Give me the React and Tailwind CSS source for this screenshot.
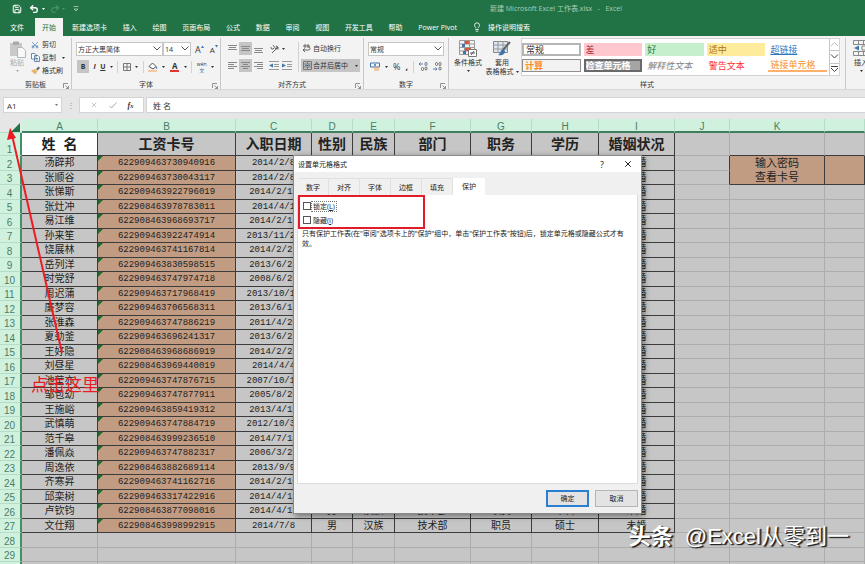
import { Lightbulb, Redo2, Save, Scissors, Undo2, X } from 'lucide-react';

const TABS = ['新建选项卡', '插入', '绘图', '页面布局', '公式', '数据', '审阅', '视图', '开发工具', '帮助', 'Power Pivot'];

const COLUMNS = [
  { letter: 'A', width: 'w-[76px]', title: '姓  名' },
  { letter: 'B', width: 'w-[138px]', title: '工资卡号' },
  { letter: 'C', width: 'w-[76px]', title: '入职日期' },
  { letter: 'D', width: 'w-[41px]', title: '性别' },
  { letter: 'E', width: 'w-[42px]', title: '民族' },
  { letter: 'F', width: 'w-[76px]', title: '部门' },
  { letter: 'G', width: 'w-[61px]', title: '职务' },
  { letter: 'H', width: 'w-[67px]', title: '学历' },
  { letter: 'I', width: 'w-[76px]', title: '婚姻状况' },
  { letter: 'J', width: 'w-[55px]' },
  { letter: 'K', width: 'w-[95px]' },
  { letter: '', width: '' }
];

const PEOPLE = [
  ['汤辟邦', '622909463730940916', '2014/2/8'],
  ['张顺谷', '622909463730043117', '2014/2/8'],
  ['张悌斯', '622909463922796019', '2014/2/12'],
  ['张灶冲', '622908463978783011', '2014/4/1'],
  ['易江维', '622908463968693717', '2014/2/17'],
  ['孙来笙', '622909463922474914', '2013/11/20'],
  ['饶展林', '622909463741167814', '2014/2/21'],
  ['岳列洋', '622909463830598515', '2013/6/23'],
  ['时党舒', '622909463747974718', '2008/6/20'],
  ['周迟蒲', '622909463717968419', '2013/10/10'],
  ['廉梦容', '622909463706568311', '2013/6/13'],
  ['张淮森', '622909463747886219', '2011/4/20'],
  ['夏劲釜', '622909463696241317', '2013/6/23'],
  ['王好隐', '622908463968686919', '2014/2/23'],
  ['刘昼星', '622908463969440019', '2014/4/4'],
  ['池莹亦', '622909463747876715', '2007/10/12'],
  ['邹包幼', '622909463747877911', '2005/8/20'],
  ['王施峪', '622909463859419312', '2013/4/13'],
  ['武慎萌', '622909463747884719', '2012/10/30'],
  ['范千皋', '622908463999236510', '2014/7/14'],
  ['潘佩焱', '622909463747882317', '2006/3/27'],
  ['周逸依', '622908463882689114', '2013/9/9'],
  ['齐寒昇', '622909463741162716', '2014/2/10'],
  ['邱栾树', '622909463317422916', '2014/4/11'],
  ['卢钦钧', '622908463877098016', '2014/4/17', '男', '汉族', '技术部', '职员', '本科'],
  ['文仕翔', '622908463998992915', '2014/7/8', '男', '汉族', '技术部', '职员', '硕士']
];

export default function App() {
  return (
    <div className="flex h-screen flex-col overflow-hidden bg-[#e6e6e6] font-['Open_Sans','Noto_Sans_CJK_SC',sans-serif] text-[7px] leading-[9px] text-[#333]">
      <TitleBar />
      <RibbonTabs />
      <Ribbon />
      <FormulaBar />
      <main className="relative min-h-0 flex-1 overflow-hidden bg-[#c6c6c6]">
        <Sheet />
        <FormatDialog />
        <Annotations />
      </main>
    </div>
  );
}

function TitleBar() {
  return (
    <header className="flex h-[18px] shrink-0 items-center bg-[#217346] text-white">
      <button aria-label="保存" className="ml-3"><Save size={10} strokeWidth={2.4} /></button>
      <button aria-label="撤消" className="ml-[7px] flex items-center gap-[3px]">
        <Undo2 size={10} strokeWidth={3.2} />
        <Caret />
      </button>
      <button aria-label="恢复" className="ml-[5px] flex items-center gap-[2px] text-[#4f9270]">
        <Redo2 size={10} strokeWidth={2.6} />
        <Caret />
      </button>
      <button aria-label="自定义" className="ml-2 text-[#a9cdb7]">
        <svg width="6" height="6" viewBox="0 0 6 6" fill="none" stroke="currentColor"><path d="M0.5 0.5h5M1 3h4L3 5z" strokeWidth=".8" /></svg>
      </button>
      <h1 className="ml-[411px] whitespace-pre pb-[2px] text-[#a9cdb7]">新建 Microsoft Excel 工作表.xlsx   -   Excel</h1>
    </header>
  );
}

function RibbonTabs() {
  return (
    <nav className="flex h-[18px] shrink-0 items-stretch bg-[#217346] text-white">
      <button className="w-[35px] pr-px">文件</button>
      <button className="w-7 bg-[#f3f3f3] text-[#217346]">开始</button>
      <div className="ml-[9px] flex w-[385px] justify-between">
        {TABS.map((tab) => <button key={tab} className="whitespace-nowrap">{tab}</button>)}
      </div>
      <button className="ml-[15px] flex items-center gap-[6px] whitespace-nowrap">
        <Lightbulb size={10} />
        操作说明搜索
      </button>
    </nav>
  );
}

function Caret() {
  return <svg className="shrink-0" width="3" height="2" viewBox="0 0 3 2"><path d="M0 0h3L1.5 2z" fill="currentColor" /></svg>;
}

function Chevron() {
  return (
    <svg className="pointer-events-none absolute right-[2px] top-[4px]" width="8" height="5" viewBox="0 0 8 5" fill="none" stroke="#555">
      <path d="M.5.5 4 4 7.500.5" />
    </svg>
  );
}

function Group({ label, width, launcher = true, children }) {
  return (
    <section className={`flex shrink-0 flex-col border-r border-[#c8c8c8] ${width}`}>
      <div className="h-[42px]">{children}</div>
      <div className="relative h-[9px] text-center">
        {label}
        {launcher ? (
          <svg className="absolute bottom-0 right-[2px]" width="6" height="6" viewBox="0 0 6 6" fill="none" stroke="#777" strokeWidth=".8">
            <path d="M.5 5V.5H5M2.500 2.500l3 3M5.500 3v2.500H3" />
          </svg>
        ) : null}
      </div>
    </section>
  );
}

function Combo({ label, value, width }) {
  return (
    <div className={`relative h-[14px] ${width}`}>
      <select aria-label={label} className="h-full w-full appearance-none border border-[#c6c6c6] bg-white pl-px leading-[11px]">
        <option>{value}</option>
      </select>
      <Chevron />
    </div>
  );
}

function Rule() {
  return <span className="h-3 w-px bg-[#d2d2d2]" />;
}

function Lines({ rows, on }) {
  return (
    <span className={`flex h-[13px] w-[13px] items-center justify-center ${on ? 'bg-[#c5c5c5]' : ''}`}>
      <svg width="9" height="9" viewBox="0 0 9 9" stroke="#888">
        {rows.map(([x1, x2, y]) => <path key={y} d={`M${x1} ${y}H${x2}`} />)}
      </svg>
    </span>
  );
}

function Indent({ out }) {
  return (
    <svg width="10" height="9" viewBox="0 0 10 9" fill="none">
      <path d="M0 .5h10M5 3.500h5M5 5.500h5M0 8.500h10" stroke="#999" />
      <path d={out ? 'M4 2.500v4L0 4.500z' : 'M0 2.500v4l4-2z'} fill="#3f75ad" />
    </svg>
  );
}

function Ribbon() {
  return (
    <div className="flex h-[54px] shrink-0 overflow-hidden border-b border-[#d8d8d8] bg-[#f3f3f3] pt-[2px]">
      <Group label="剪贴板" width="w-[72px]">
        <div className="flex pl-2">
          <button className="flex w-[18px] flex-col items-center pt-[2px] text-[#aaa]">
            <PasteIcon />
            粘贴
            <span className="mt-[3px]"><Caret /></span>
          </button>
          <div className="ml-[5px] flex flex-col">
            <button className="flex h-[13px] items-center gap-[3px]"><Scissors size={8} className="-rotate-90 text-[#3f75ad]" />剪切</button>
            <button className="flex h-[13px] items-center gap-[2px]"><CopyIcon />复制<span className="ml-1"><Caret /></span></button>
            <button className="flex h-[13px] items-center gap-[2px]"><BrushIcon />格式刷</button>
          </div>
        </div>
      </Group>

      <Group label="字体" width="w-[149px]">
        <div className="flex items-center pl-1 pt-1">
          <Combo label="字体" value="方正大黑简体" width="w-[87px]" />
          <Combo label="字号" value="14" width="w-7" />
          <button aria-label="增大字号" className="ml-1 flex text-[9px]">
            A
            <svg width="3" height="3" viewBox="0 0 3 3"><path d="M0 3h3L1.500.5z" fill="#3f75ad" /></svg>
          </button>
          <button aria-label="减小字号" className="ml-[6px] flex text-[8px]">
            A
            <svg width="3" height="3" viewBox="0 0 3 3"><path d="M0 0h3L1.500 2.500z" fill="#3f75ad" /></svg>
          </button>
        </div>
        <div className="mt-1 flex h-[13px] items-center justify-between pl-[5px] pr-[6px]">
          <button className="h-[13px] w-3 bg-[#c5c5c5] font-bold">B</button>
          <button className="font-bold italic">I</button>
          <button className="font-bold underline">U</button>
          <Caret />
          <Rule />
          <svg width="8" height="8" viewBox="0 0 8 8" fill="none" stroke="#777"><path d="M.5.5h7v7h-7zM4 0v8M0 4h8" /></svg>
          <Caret />
          <Rule />
          <svg width="10" height="10" viewBox="0 0 10 10" fill="none">
            <path d="M1 4.500 4.500 1 8 4.500 5 7z" stroke="#555" fill="#fff" />
            <path d="M8 4c1 1 1.500 2 1 3-.8.3-1.200-1-1-3z" fill="#3f75ad" />
            <path d="M0 8h9v2H0z" fill="#f5c7a0" />
          </svg>
          <Caret />
          <span className="border-b-2 border-[#e3342f] px-[2px] text-[8px] font-bold leading-[8px]">A</span>
          <Caret />
          <Rule />
          <span className="flex flex-col items-center text-[5px] leading-[6px]">wén<span className="text-[#3f75ad]">文</span></span>
          <Caret />
        </div>
      </Group>

      <Group label="对齐方式" width="w-[143px]">
        <div className="flex pl-[5px] pt-1">
          <div className="flex w-[72px] flex-col gap-1">
            <div className="flex items-center">
              <Lines rows={[[0, 9, 1.5], [1, 8, 3.5], [0, 9, 5.5]]} />
              <Lines on rows={[[0, 9, 2.5], [1, 8, 4.5], [0, 9, 6.5]]} />
              <Lines rows={[[0, 9, 4.5], [1, 8, 6.5], [0, 9, 8.5]]} />
              <svg className="ml-[5px] mr-[3px]" width="9" height="9" viewBox="0 0 9 9" fill="none" stroke="#555">
                <path d="M1 3a1.500 1.500 0 1 0 3 1M3 1l3 4a1.500 1.500 0 1 0 0-3M2 9l6-6M8 5.500V3H6" strokeWidth=".9" />
              </svg>
              <Caret />
            </div>
            <div className="flex items-center">
              <Lines rows={[[0, 9, 1.5], [0, 6, 3.5], [0, 9, 5.5], [0, 6, 7.5]]} />
              <Lines on rows={[[0, 9, 1.5], [2, 7, 3.5], [0, 9, 5.5], [2, 7, 7.5]]} />
              <Lines rows={[[0, 9, 1.5], [3, 9, 3.5], [0, 9, 5.5], [3, 9, 7.5]]} />
              <span className="ml-1 flex gap-[3px]"><Indent out /><Indent /></span>
            </div>
          </div>
          <div className="flex flex-col gap-1 border-l border-[#d2d2d2] pl-[2px]">
            <button className="flex h-[13px] items-center gap-[2px] px-[2px]">
              <svg width="8" height="9" viewBox="0 0 8 9" fill="none" stroke="#555" strokeWidth=".9"><path d="M0 2h7M2 0v4M5 0v4M0 6h5.500a1.500 1.500 0 0 0 0-3M2 4.500 0 6l2 2" /></svg>
              自动换行
            </button>
            <button className="flex h-[13px] w-[59px] items-center gap-px bg-[#c5c5c5] px-[2px]">
              <svg width="9" height="9" viewBox="0 0 9 9" fill="none"><path d="M.5.5h8v8h-8zM0 3h9M0 6h9M4.500 0v3M4.500 6v3" stroke="#777" /><path d="M2 4.500h5" stroke="#3f75ad" /></svg>
              合并后居中
              <span className="ml-auto"><Caret /></span>
            </button>
          </div>
        </div>
      </Group>

      <Group label="数字" width="w-[85px]">
        <div className="px-1 pt-1"><Combo label="数字格式" value="常规" width="w-full" /></div>
        <div className="mt-1 flex h-[13px] items-center justify-between px-[6px]">
          <svg width="10" height="9" viewBox="0 0 10 9" fill="none"><path d="M.5 1h9v4h-9z" stroke="#3f75ad" /><circle cx="5" cy="3" r="1" fill="#3f75ad" /><path d="M4 6h5M4 8h5" stroke="#e8a25c" /></svg>
          <Caret />
          <span className="text-[9px]">%</span>
          <span className="text-[9px] font-bold">,</span>
          <Rule />
          <DecimalIcon arrow="M4 2H0M1.500.5 0 2l1.500 1.500" top={6} />
          <DecimalIcon arrow="M0 7h4M2.500 5.500 4 7 2.500 8.500" top={1} />
        </div>
      </Group>

      <Group label="样式" width="w-[397px]" launcher={false}>
        <div className="flex pl-1">
          <button className="flex w-[30px] flex-col items-center pt-[2px]">
            <svg width="18" height="17" viewBox="0 0 18 17" fill="none">
              <path d="M.5.500h15v14H.5zM0 4h16M0 7.500h16M0 11h16M5.500 0v15M10.500 0v15" stroke="#999" />
              <path d="M6 1h4v3H6zM6 8h6v3H6z" fill="#d9553b" />
              <path d="M3 4h3v3H3zM4 11h3v3H4z" fill="#3f75ad" />
              <path d="M9.500 9.500h8v7h-8z" fill="#fff" stroke="#777" /><path d="M11 13h5M15 11l-3 4" stroke="#555" />
            </svg>
            <span className="mt-px whitespace-nowrap">条件格式</span>
            <span className="mt-[3px]"><Caret /></span>
          </button>
          <button className="ml-[2px] flex w-[34px] flex-col items-center pt-[2px]">
            <svg width="18" height="17" viewBox="0 0 18 17" fill="none">
              <path d="M.5 1.500h14v11H.5z" fill="#dce7f3" stroke="#888" /><path d="M0 5h15M0 9h15M5 1v12M10 1v12" stroke="#999" />
              <path d="m17 2-7 8" stroke="#666" strokeWidth="2" /><path d="M10 9c-3 1-2 4-5 6 3 1 7 0 7-4z" fill="#3f75ad" />
            </svg>
            <span className="mt-px">套用</span>
            <span className="flex items-center gap-[2px] whitespace-nowrap">表格格式<Caret /></span>
          </button>
          <StyleGallery />
        </div>
      </Group>

      <button className="flex w-[30px] shrink-0 flex-col items-center pt-[2px]">
        <svg width="16" height="17" viewBox="0 0 16 17" fill="none">
          <path d="M.5.5h15v4H.5zM.5 11.500h15v4H.5zM5.500 0v4M10.500 0v4M5.500 12v4M10.500 12v4M9 6h7v4H9z" stroke="#888" />
          <path d="M6 5.500v5L1 8z" fill="#3f75ad" />
        </svg>
        <span className="mt-px">插入</span>
        <span className="mt-[3px]"><Caret /></span>
      </button>
    </div>
  );
}

function DecimalIcon({ arrow, top }) {
  return (
    <svg width="9" height="9" viewBox="0 0 9 9" fill="none">
      <path d={arrow} stroke="#3f75ad" strokeWidth=".9" />
      <g stroke="#555" strokeWidth=".8">
        <rect x="6" y=".5" width="2" height="3" rx="1" />
        <rect x="6" y="5" width="2" height="3" rx="1" />
        <rect x="2.500" y={top - 0.5} width="2" height="3" rx="1" />
      </g>
    </svg>
  );
}

function PasteIcon() {
  return (
    <svg width="17" height="18" viewBox="0 0 17 18" fill="none">
      <path d="M1 3h12v13H1z" fill="#c9c9c9" />
      <path d="M4 1.500h6V5H4z" fill="#aaa" />
      <path d="M8.500 7.500h5l3 3v7h-8z" fill="#f8f8f8" stroke="#b5b5b5" />
    </svg>
  );
}

function CopyIcon() {
  return (
    <svg width="9" height="9" viewBox="0 0 9 9" fill="#fff" stroke="#5b7da5" strokeWidth=".9">
      <path d="M.5.5h3.500l1 1v4.500H.5zM3.500 2.500H7l1.500 1.500v4.500h-5zM5 5.500h2M5 7h2" />
    </svg>
  );
}

function BrushIcon() {
  return (
    <svg width="9" height="9" viewBox="0 0 9 9">
      <path d="m5 3 2.500-2.500L9 2 6.500 4.500z" fill="#666" />
      <path d="M0 4.500 4 3l2.500 2.500L4 8.500z" fill="#e9b56b" />
    </svg>
  );
}

function StyleGallery() {
  const cell = 'flex h-[13px] items-center overflow-hidden whitespace-nowrap text-[9px] leading-[9px]';
  return (
    <div className="ml-auto mr-[5px] flex h-[38px] w-[319px] border border-[#d2d2d2] bg-white">
      <div className="grid flex-1 grid-cols-5 content-center gap-[3px] pr-[2px]">
        <button className={`${cell} border-2 border-[#b5b5b5] px-[2px]`}>常规</button>
        <button className={`${cell} bg-[#ffc7ce] px-[2px] text-[#b32b3c]`}>差</button>
        <button className={`${cell} bg-[#c6efce] px-[2px] text-[#2c7a3a]`}>好</button>
        <button className={`${cell} bg-[#ffeb9c] px-[2px] text-[#a87619]`}>适中</button>
        <button className={`${cell} px-[2px] text-[#2f77c2] underline`}>超链接</button>
        <button className={`${cell} border border-[#8f8f8f] bg-[#f2f2f2] px-[2px] font-bold text-[#fa8d2a]`}>计算</button>
        <button className={`${cell} border-2 border-[#6a6a6a] bg-[#a5a5a5] font-bold text-white`}>检查单元格</button>
        <button className={`${cell} px-[2px] italic text-[#7f7f7f]`}>解释性文本</button>
        <button className={`${cell} px-[2px] text-[#ff3030]`}>警告文本</button>
        <button className={`${cell} border-b-2 border-[#ffb06a] px-[2px] text-[#fa8d2a]`}>链接单元格</button>
      </div>
      <div className="flex w-[10px] flex-col border-l border-[#c6c6c6]">
        {['M1 4 4.500.5 8 4', 'M1 .5 4.500 4 8 .5', 'M1 .500h7M1 2l3.500 3.500L8 2'].map((d, i) => (
          <button key={d} aria-label="滚动样式" className="flex flex-1 items-center border-b border-[#c6c6c6] last:border-b-0">
            <svg width="9" height="6" viewBox="0 0 9 6" fill="none" stroke={i ? '#444' : '#bbb'}><path d={d} /></svg>
          </button>
        ))}
      </div>
    </div>
  );
}

function FormulaBar() {
  return (
    <div className="flex h-[29px] shrink-0 items-start pl-[3px] pt-[7px] text-[8px]">
      <div className="relative h-4 w-[59px]">
        <input aria-label="名称框" defaultValue="A1" className="h-full w-full border border-[#d4d4d4] bg-white pl-[3px] outline-none" />
        <span className="absolute right-1 top-[7px] text-[#777]"><Caret /></span>
      </div>
      <span className="w-[17px] text-center leading-4 text-[#999]">⋮</span>
      <div className="flex h-4 w-[65px] items-center justify-around border border-[#d4d4d4] bg-white px-1">
        <X size={8} className="text-[#aaa]" />
        <svg width="8" height="7" viewBox="0 0 8 7" fill="none" stroke="#aaa"><path d="m.5 4 2 2 5-5.500" /></svg>
        <i className="font-['Liberation_Serif',serif] font-bold">f<small>x</small></i>
      </div>
      <input aria-label="编辑栏" defaultValue="姓 名" className="ml-[2px] h-4 min-w-0 flex-1 border border-r-0 border-[#d4d4d4] bg-white pl-[6px] outline-none" />
    </div>
  );
}

function Sheet() {
  const rowHead = 'border-b border-r-2 border-b-[#b5dcc6] border-r-[#3f9068] bg-[#d1f1df] p-0 pr-px align-bottom text-[10px] font-normal leading-[10px] text-[#4b7d65]';
  const grid = 'border-b border-r border-[#adadad] p-0';
  const data = 'overflow-hidden whitespace-nowrap border-b border-r border-[#3c3c3c] p-0 text-center';

  return (
    <table className="w-full table-fixed border-separate border-spacing-0 font-['Liberation_Sans','Noto_Sans_CJK_SC',sans-serif] text-[#222]">
      <colgroup>
        <col className="w-[22px]" />
        {COLUMNS.map((col, i) => <col key={i} className={col.width} />)}
      </colgroup>
      <thead>
        <tr className="h-[14px]">
          <th className="border-b border-[#b5dcc6] bg-[#e6e6e6] p-0 align-bottom">
            <svg className="ml-auto mr-[2px]" width="9" height="9" viewBox="0 0 9 9"><path d="M9 0v9H0z" fill="#217346" /></svg>
          </th>
          {COLUMNS.map((col, i) => (
            <th key={i} className="border-b-2 border-r border-b-[#3f7f60] border-r-[#b5dcc6] bg-[#d1f1df] p-0 pt-[3px] text-[10px] font-normal leading-[9px] text-[#4b7d65]">{col.letter}</th>
          ))}
        </tr>
      </thead>
      <tbody>
        <tr className="h-[23px]">
          <th className={rowHead}>1</th>
          {COLUMNS.map((col, i) => (
            <td
              key={i}
              className={col.title ? `${data} whitespace-pre text-[14px] font-bold leading-[22px] ${i === 0 ? 'bg-white' : ''}` : `${grid} ${i > 9 ? 'border-b-[#3c3c3c]' : ''}`}
            >
              {col.title}
            </td>
          ))}
        </tr>
        {PEOPLE.map((person, r) => (
          <tr key={person[1]} className={r % 2 ? 'h-[14px]' : 'h-[15px]'}>
            <th className={rowHead}>{r + 2}</th>
            <td className={`${data} text-[10px] leading-[12px]`}>{person[0]}</td>
            <td className={`${data} relative bg-[#c29c82] font-['Liberation_Mono',monospace] text-[9px] leading-[12px]`}>
              <svg className="absolute left-0 top-0" width="5" height="5" viewBox="0 0 5 5"><path d="M0 0h5L0 5z" fill="#1d6b2c" /></svg>
              {person[1]}
            </td>
            <td className={`${data} font-['Liberation_Mono',monospace] text-[9px] leading-[12px]`}>{person[2]}</td>
            {[3, 4, 5, 6, 7].map((i) => <td key={i} className={`${data} text-[10px] leading-[12px]`}>{person[i]}</td>)}
            <td className={`${data} text-[10px] leading-[12px]`}>未婚</td>
            <td className={`${grid} ${r < 2 ? 'border-r-[#3c3c3c]' : ''}`} />
            {r === 0 ? (
              <>
                <td rowSpan={2} className={`${data} bg-[#c29c82] text-[11px] leading-[14px]`}>输入密码<br />查看卡号</td>
                <td rowSpan={2} className={`${data} bg-[#c29c82]`} />
              </>
            ) : null}
            {r > 1 ? <><td className={grid} /><td className={grid} /></> : null}
          </tr>
        ))}
        {['28', '29', ''].map((n, r) => (
          <tr key={n} className={r % 2 ? 'h-[14px]' : 'h-[15px]'}>
            <th className={rowHead}>{n}</th>
            {COLUMNS.map((col, i) => <td key={i} className={grid} />)}
          </tr>
        ))}
      </tbody>
    </table>
  );
}

function FormatDialog() {
  return (
    <div role="dialog" aria-label="设置单元格格式" className="absolute left-[293px] top-9 flex h-[359px] w-[349px] flex-col border border-[#8a8a8a] bg-[#f0f0f0] text-[#222] shadow-[2px_2px_6px_rgba(0,0,0,0.45)]">
      <div className="flex h-4 shrink-0 items-center bg-white pl-1">
        <h2>设置单元格格式</h2>
        <button aria-label="帮助" className="ml-auto text-[9px]">?</button>
        <button aria-label="关闭" className="ml-[19px] mr-2"><X size={10} strokeWidth={2.400} /></button>
      </div>
      <div className="mt-[6px] flex h-[17px] shrink-0 pl-1">
        {['数字', '对齐', '字体', '边框', '填充'].map((tab) => (
          <button key={tab} className="w-[31px] border-r border-t border-[#e0e0e0]">{tab}</button>
        ))}
        <button className="w-8 bg-white">保护</button>
      </div>
      <div className="mx-[3px] flex-1 border border-t-0 border-[#dcdcdc] bg-white">
        <div className="w-[127px] border-2 border-[#e01b2a] pl-[3px] pt-[2px]">
          <CheckRow text="锁定" hotkey="L" focused />
          <CheckRow text="隐藏" hotkey="I" />
        </div>
        <p className="px-1 leading-[10px]">
          只有保护工作表(在"审阅"选项卡上的"保护"组中，单击"保护工作表"按钮)后，锁定单元格或隐藏公式才有效。
        </p>
      </div>
      <div className="flex h-[29px] shrink-0 items-center justify-end gap-[6px] pr-[3px]">
        <button className="h-[17px] w-[43px] border-2 border-[#2a7fd0] bg-[#e3e3e3]">确定</button>
        <button className="h-[17px] w-[43px] border border-[#b5b5b5] bg-[#e3e3e3]">取消</button>
      </div>
    </div>
  );
}

function CheckRow({ text, hotkey, focused }) {
  return (
    <label className="flex h-[14px] items-center">
      <input type="checkbox" className="h-2 w-2 appearance-none border border-[#555] bg-white" />
      <span className={`border px-px ${focused ? 'border-dotted border-[#777]' : 'border-transparent'}`}>{text}(<u>{hotkey}</u>)</span>
    </label>
  );
}

function Annotations() {
  return (
    <>
      <svg className="pointer-events-none absolute left-0 top-0" width="80" height="240" viewBox="0 0 80 240">
        <path d="M12 16 62 234" stroke="#ed1c24" strokeWidth="2" />
        <path d="M10 9 16 19 7 21z" fill="#ed1c24" />
      </svg>
      <p className="absolute left-[31px] top-[256px] text-[17px] leading-[20px] text-[#ed1c24]">点击这里</p>
      <p className="absolute bottom-[14px] right-4 flex items-center gap-3 whitespace-nowrap font-['Liberation_Sans','Noto_Sans_CJK_SC',sans-serif] text-[22px] leading-[26px] text-white [text-shadow:1px_1px_1px_#222,2px_1px_1px_#333]">
        <b>头条</b>
        <span>@Excel从零到一</span>
      </p>
    </>
  );
}
